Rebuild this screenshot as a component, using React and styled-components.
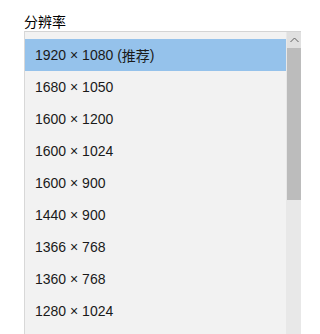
import React from "react";
import styled, { createGlobalStyle } from "styled-components";

const Global = createGlobalStyle`
  html, body { margin: 0; padding: 0; background: #ffffff; }
  body { font-family: "Liberation Sans", "Noto Sans CJK SC", sans-serif; }
`;

const Page = styled.div`
  width: 301px;
  height: 334px;
  overflow: hidden;
  padding: 12px 0 0 24px;
  box-sizing: border-box;
  display: flex;
  flex-direction: column;
`;

const Label = styled.div`
  font-size: 14px;
  line-height: 19px;
  color: #000;
  font-family: "Noto Sans CJK SC", sans-serif;
  height: 19px;
`;

const Panel = styled.div`
  flex: 1;
  display: flex;
  background: #f2f2f2;
  border-top: 1px solid #d4d4d4;
  border-left: 1px solid #d8d8d8;
  min-height: 0;
`;

const List = styled.div`
  flex: 1;
  padding-top: 7px;
  display: flex;
  flex-direction: column;
`;

const Row = styled.div`
  height: 32px;
  display: flex;
  align-items: center;
  padding: 0 0 0 10px;
  box-sizing: border-box;
  font-size: 14px;
  color: #1a1a1a;
  background: ${(p) => (p.$selected ? "#95c2eb" : "transparent")};
  flex-shrink: 0;
`;

const Cjk = styled.span`
  font-family: "Noto Sans CJK SC", sans-serif;
  font-size: 14px;
`;

const Scrollbar = styled.div`
  width: 14px;
  background: #e8e8e8;
  display: flex;
  flex-direction: column;
  padding-left: 1px;
`;

const ArrowButton = styled.div`
  height: 16px;
  background: #e0e0e0;
  display: flex;
  align-items: center;
  justify-content: center;
`;

const Thumb = styled.div`
  height: 152px;
  background: #bcbcbc;
`;

const resolutions = [
  "1680 × 1050",
  "1600 × 1200",
  "1600 × 1024",
  "1600 × 900",
  "1440 × 900",
  "1366 × 768",
  "1360 × 768",
  "1280 × 1024",
];

export default function App() {
  return (
    <>
      <Global />
      <Page>
        <Label>分辨率</Label>
        <Panel>
          <List>
            <Row $selected>
              1920 × 1080 (<Cjk>推荐</Cjk>)
            </Row>
            {resolutions.map((r) => (
              <Row key={r}>{r}</Row>
            ))}
          </List>
          <Scrollbar>
            <ArrowButton>
              <svg width="9" height="6" viewBox="0 0 9 6">
                <path d="M0.5 5 L4.5 1 L8.5 5" fill="none" stroke="#606060" strokeWidth="1" />
              </svg>
            </ArrowButton>
            <Thumb />
          </Scrollbar>
        </Panel>
      </Page>
    </>
  );
}
